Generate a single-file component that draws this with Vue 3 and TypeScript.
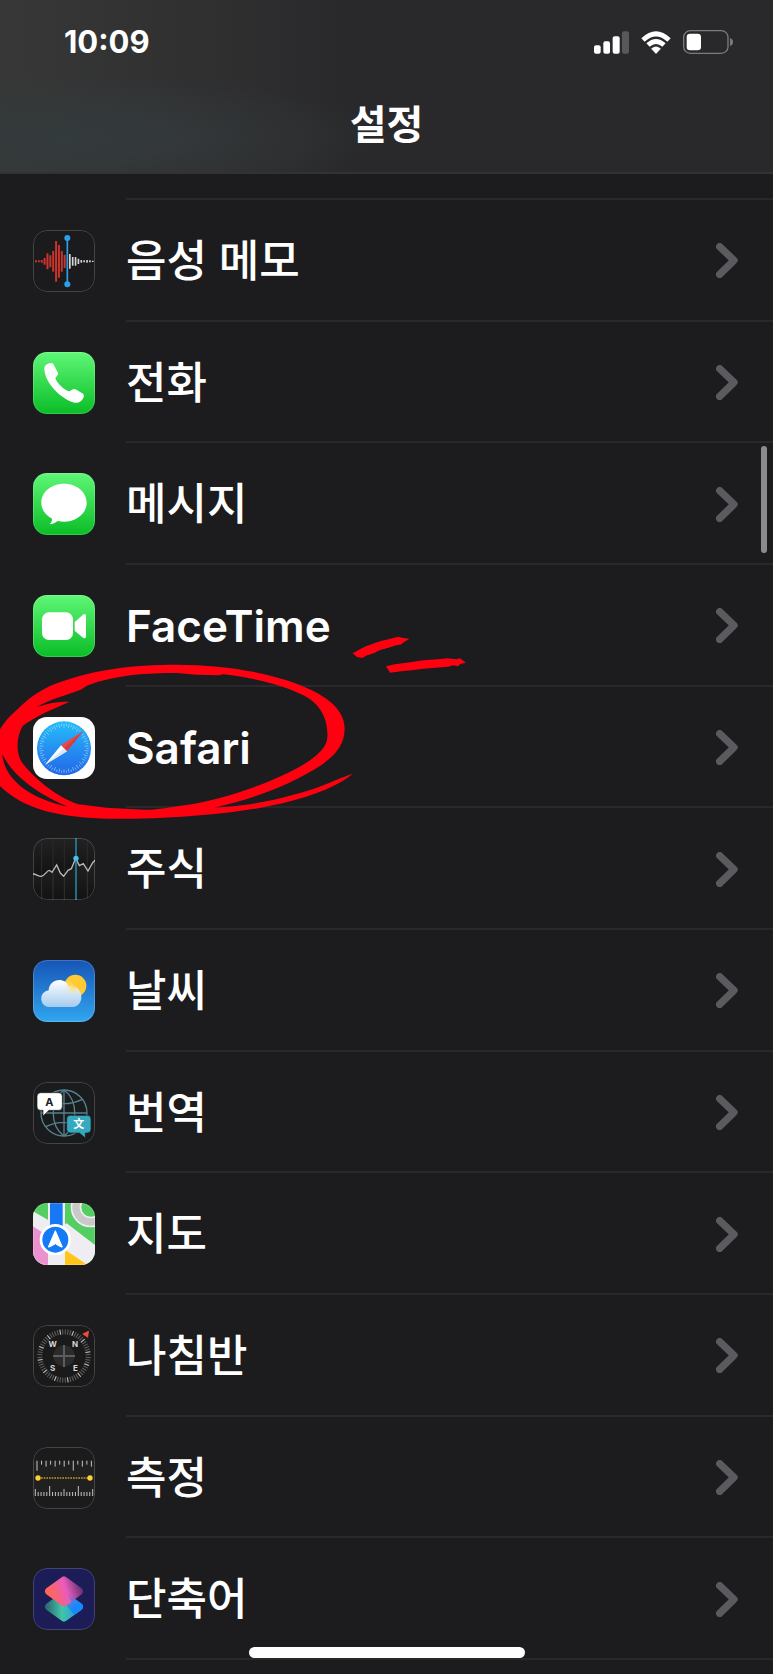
<script setup lang="ts">
interface SettingsItem {
  id: string
  label: string
  latin?: boolean
}

interface Tick {
  x: number
  length: number
}

const items: SettingsItem[] = [
  { id: 'voice', label: '음성 메모' },
  { id: 'phone', label: '전화' },
  { id: 'messages', label: '메시지' },
  { id: 'facetime', label: 'FaceTime', latin: true },
  { id: 'safari', label: 'Safari', latin: true },
  { id: 'stocks', label: '주식' },
  { id: 'weather', label: '날씨' },
  { id: 'translate', label: '번역' },
  { id: 'maps', label: '지도' },
  { id: 'compass', label: '나침반' },
  { id: 'measure', label: '측정' },
  { id: 'shortcuts', label: '단축어' },
]

const wave = [3, 3, 4, 10, 24, 18, 31, 61, 49, 31, 20]
const echo = [22, 13, 13, 8, 4, 3, 4, 3, 2]

const upperTicks: Tick[] = Array.from({ length: 13 }, (_, i) => ({
  x: 12 + i * 13.6,
  length: i === 0 || i === 8 ? 30 : i % 2 ? 12 : 18,
}))
const lowerTicks: Tick[] = Array.from({ length: 21 }, (_, i) => ({
  x: 7 + i * 8.6,
  length: i === 5 || i === 15 ? 30 : i % 5 === 0 ? 21 : 12,
}))
const dialTicks = Array.from({ length: 60 }, (_, i) => i * 6)
</script>

<template>
  <div class="screen">
    <header class="top">
      <div class="status">
        <time class="clock">10:09</time>
        <div class="signals">
          <svg class="bars" viewBox="0 0 105 69" aria-label="셀룰러 신호">
            <rect x="0" y="43" width="20" height="25" rx="6" fill="#fff" />
            <rect x="28" y="31" width="20" height="37" rx="6" fill="#fff" />
            <rect x="56" y="16" width="21" height="52" rx="6" fill="#fff" />
            <rect x="84" y="1" width="21" height="67" rx="6" fill="#58585a" />
          </svg>
          <svg class="wifi" viewBox="0 0 90 69" aria-label="Wi-Fi">
            <path d="M1 22Q45-20 89 22L79 32Q45 1 11 32Z" fill="#fff" />
            <path d="M16 37Q45 11 74 37L64 47Q45 31 26 47Z" fill="#fff" />
            <path d="M31 53Q45 41 59 53L45 68Z" fill="#fff" stroke="#fff" stroke-width="1" />
          </svg>
          <svg class="battery" viewBox="0 0 150 72" aria-label="배터리">
            <rect x="2" y="2" width="133" height="68" rx="20" fill="none" stroke="#7b7b7d" stroke-width="4" />
            <rect x="11" y="11" width="43" height="50" rx="10" fill="#fff" />
            <path d="M141 24Q150 27 150 36T141 48Z" fill="#7b7b7d" />
          </svg>
        </div>
      </div>
      <h1 class="title">설정</h1>
    </header>

    <main class="content">
      <ul class="list">
        <li v-for="item in items" :key="item.id" class="row">
          <a class="link" :href="'#' + item.id">
            <svg class="icon" viewBox="0 0 186 186" aria-hidden="true">
              <g v-if="item.id === 'voice'">
                <rect width="186" height="186" fill="#1b1b1d" />
                <rect v-for="(h, i) in wave" :key="'w' + i" :x="6 + i * 8.6" :y="94 - h" width="6" :height="h * 2" rx="1" fill="#c9342d" />
                <rect v-for="(h, i) in echo" :key="'e' + i" :x="108 + i * 8.6" :y="94 - h" width="5" :height="h * 2" rx="1" fill="#d6d6d6" />
                <path d="M103 24V163" stroke="#2b9fe8" stroke-width="5" />
                <circle cx="103" cy="24" r="9" fill="#2b9fe8" />
                <circle cx="103" cy="163" r="9" fill="#2b9fe8" />
              </g>

              <g v-else-if="item.id === 'phone'">
                <rect width="186" height="186" fill="url(#green)" />
                <path d="M34 51C33 41 43 34 54 33C59 33 62 37 64 42L74 61C76 66 75 69 71 73L67 79C70 92 97 117 109 118L117 113C121 110 125 110 130 113L148 124C153 127 154 132 151 138C147 147 137 154 125 152C86 143 35 93 34 51Z" fill="#fff" />
              </g>

              <g v-else-if="item.id === 'messages'">
                <rect width="186" height="186" fill="url(#green)" />
                <path d="M93 32C131 32 161 57 161 89S131 146 93 146C86 146 80 145 74 144C68 149 58 155 50 153C56 149 57 143 57 137C37 127 25 109 25 89C25 57 55 32 93 32Z" fill="#fff" />
              </g>

              <g v-else-if="item.id === 'facetime'">
                <rect width="186" height="186" fill="url(#green)" />
                <rect x="27" y="52" width="93" height="83" rx="21" fill="#fff" />
                <path d="M125 81L150 59Q159 53 159 64V123Q159 134 150 128L125 107Z" fill="#fff" />
              </g>

              <g v-else-if="item.id === 'safari'">
                <rect width="186" height="186" fill="#fff" />
                <circle cx="93" cy="94" r="81" fill="url(#safari-blue)" />
                <g stroke="#b9e5ff" stroke-width="1.6">
                  <path v-for="a in dialTicks" :key="a" :d="a % 12 ? 'M93 20V27' : 'M93 20V32'" :transform="`rotate(${a} 93 94)`" />
                </g>
                <path d="M150 43L84 85L102 103Z" fill="#ef4545" />
                <path d="M102 103L84 85L36 143Z" fill="#fff" />
                <path d="M150 43L93 94L102 103Z" fill="#d43d43" />
                <path d="M36 143L93 94L102 103Z" fill="#d9e8f7" />
              </g>

              <g v-else-if="item.id === 'stocks'">
                <rect width="186" height="186" fill="url(#stocks-black)" />
                <path d="M26 0V186M60 0V186M94 0V186M163 0V186" stroke="#2b2b2d" stroke-width="3" />
                <path d="M0 108C8 107 15 115 25 115C35 114 42 97 49 97L57 103L71 81L82 105L92 115L105 97L115 92L128 61L139 83L151 77L165 99L179 74L186 67V186H0Z" fill="#777" fill-opacity=".1" />
                <path d="M0 108C8 107 15 115 25 115C35 114 42 97 49 97L57 103L71 81L82 105L92 115L105 97L115 92L128 61L139 83L151 77L165 99L179 74L186 67" fill="none" stroke="#bababa" stroke-width="4" />
                <path d="M129 0V186" stroke="#25809d" stroke-width="5" />
                <circle cx="129" cy="61" r="8" fill="#43c3ee" />
              </g>

              <g v-else-if="item.id === 'weather'">
                <rect width="186" height="186" fill="url(#sky)" />
                <circle cx="127" cy="77" r="33" fill="#ffcb35" />
                <path d="M52 141A25 25 0 0 1 47 91C48 56 95 48 108 79C130 76 145 91 145 111C145 128 134 141 119 141Z" fill="url(#cloud)" />
                <path d="M95 78C98 70 103 65 108 61C117 70 138 95 143 103C145 120 90 112 95 78Z" fill="url(#glow)" />
              </g>

              <g v-else-if="item.id === 'translate'">
                <rect width="186" height="186" fill="#1a1b1c" />
                <g fill="none" stroke="#56818d" stroke-width="4">
                  <circle cx="93" cy="93" r="69" />
                  <path d="M93 24V162M24 93H162M38 52Q93 78 148 52M38 134Q93 108 148 134" />
                  <path d="M93 24C50 55 50 131 93 162M93 24C136 55 136 131 93 162" />
                </g>
                <path d="M23 32H77Q88 32 88 43V74Q88 85 77 85H48L30 102V85H23Q12 85 12 74V43Q12 32 23 32Z" fill="#fff" stroke="#1a1b1c" stroke-width="2" />
                <text x="49" y="73" class="glyph dark">A</text>
                <path d="M112 100H163Q174 100 174 111V142Q174 153 163 153H157V168L139 153H112Q101 153 101 142V111Q101 100 112 100Z" fill="#35a9bf" stroke="#1a1b1c" stroke-width="2" />
                <text x="137" y="139" class="glyph">文</text>
              </g>

              <g v-else-if="item.id === 'maps'">
                <rect width="186" height="186" fill="#54ce62" />
                <path d="M0 25L47 52V186H0Z" fill="#eeeef2" />
                <path d="M0 70L46 100V186H0Z" fill="#eb91d0" />
                <path d="M45 90L101 61L186 126V186H45Z" fill="#eeeef2" />
                <path d="M96 140L164 186H96Z" fill="#ffc619" />
                <path d="M45 0H96V78H45Z" fill="#eeeef2" />
                <path d="M51 0H89V80H51Z" fill="#1679f3" />
                <circle cx="173" cy="13" r="44" fill="none" stroke="#eeeef2" stroke-width="32" />
                <circle cx="173" cy="13" r="44" fill="none" stroke="#c9c9ca" stroke-width="22" />
                <circle cx="67" cy="110" r="47" fill="#fff" />
                <circle cx="67" cy="110" r="39" fill="#147af5" />
                <path d="M67 83L88 132Q86 134 67 122Q48 134 46 132Z" fill="#fff" stroke="#fff" stroke-width="3" stroke-linejoin="round" />
              </g>

              <g v-else-if="item.id === 'compass'">
                <rect width="186" height="186" fill="#1a1a1b" />
                <g stroke-width="3">
                  <path v-for="a in dialTicks" :key="a" d="M93 13V28" :stroke="(a + 15) % 30 < 6 ? '#d0d0d0' : '#626262'" :transform="`rotate(${a + 3} 93 93)`" />
                </g>
                <circle cx="93" cy="93" r="32" fill="#2b2b2c" />
                <path d="M93 60V126M60 93H126" stroke="#5c5c5e" stroke-width="6" />
                <path d="M149 27L167 18L164 37Z" fill="#f44a3e" stroke="#f44a3e" stroke-width="2" />
                <text x="59" y="66" class="cardinal">W</text>
                <text x="126" y="66" class="cardinal">N</text>
                <text x="59" y="137" class="cardinal">S</text>
                <text x="127" y="137" class="cardinal">E</text>
              </g>

              <g v-else-if="item.id === 'measure'">
                <rect width="186" height="186" fill="#1b1b1b" />
                <rect y="41" width="186" height="106" fill="#202020" />
                <g stroke="#c2c2c2" stroke-width="3">
                  <path v-for="tick in upperTicks" :key="'u' + tick.x" :d="`M${tick.x} 41v${tick.length}`" />
                  <path v-for="tick in lowerTicks" :key="'l' + tick.x" :d="`M${tick.x} 147v-${tick.length}`" />
                </g>
                <path d="M24 93H164" stroke="#bd982d" stroke-width="4" stroke-dasharray="5 3" />
                <circle cx="15" cy="93" r="8" fill="#ffcf33" />
                <circle cx="171" cy="93" r="8" fill="#ffcf33" />
              </g>

              <g v-else>
                <rect width="186" height="186" fill="#1c1c56" />
                <path d="M40 107L84 76Q93 70 102 76L146 107Q155 116 146 125L102 157Q93 165 84 157L40 125Q31 116 40 107Z" fill="url(#lower-tile)" />
                <path d="M40 61L84 29Q93 20 102 29L146 61Q155 70 146 79L102 111Q93 118 84 111L40 79Q31 70 40 61Z" fill="url(#upper-tile)" />
                <path d="M99 74L146 107Q155 116 146 125L124 141L101 112L116 101Q106 83 99 74Z" fill="url(#fold)" />
              </g>
              <rect x="1.5" y="1.5" width="183" height="183" rx="40" fill="none" stroke="#fff" stroke-opacity=".18" stroke-width="3" />
            </svg>
            <span class="label" :class="{ latin: item.latin }">{{ item.label }}</span>
            <svg class="chevron" viewBox="0 0 66 105" aria-hidden="true">
              <path d="M11 11L54 52L11 94" fill="none" stroke="#5b5b5f" stroke-width="22" stroke-linecap="round" stroke-linejoin="round" />
            </svg>
          </a>
          <svg v-if="item.id === 'safari'" class="marker" viewBox="0 0 1440 630" aria-hidden="true">
            <g fill="#ff0010">
              <path fill-rule="evenodd" d="M0 325C15 300 30 285 50 267C80 238 105 217 150 195C270 145 400 131 530 131C650 132 755 145 860 178C980 218 1035 265 1034 325C1033 370 1008 403 960 435C870 492 755 536 640 560C760 553 830 537 920 510C980 491 1025 468 1058 458C1030 482 990 501 940 520C850 552 730 573 600 583C500 592 380 597 280 591C130 584 50 544 0 495ZM110 258C150 235 205 221 245 205L260 194C350 160 445 156 530 156L590 161L655 163L670 160C765 171 850 192 910 223C965 250 985 300 982 350C980 390 920 430 850 462C770 500 650 539 560 552C500 559 470 568 430 566L320 560L235 550C165 525 100 470 65 423C48 395 48 350 68 315C100 290 160 263 208 243C180 239 145 247 110 258ZM7 400C12 470 80 530 205 558C125 523 45 475 7 400Z" />
              <path d="M1058 97C1080 86 1090 77 1115 70C1140 58 1165 56 1182 50L1195 47L1205 50L1228 53L1208 66C1205 74 1185 71 1180 76C1160 84 1145 83 1125 95L1098 104L1087 111L1071 108Z" />
              <path d="M1158 136L1185 130L1230 124L1270 118L1325 114L1340 112L1370 115L1380 112L1398 125L1381 129L1374 136L1360 133L1345 137L1270 143L1235 148L1210 150L1170 155Z" />
            </g>
          </svg>
        </li>
      </ul>
      <div class="scrollbar"></div>
    </main>
    <div class="home"></div>

    <svg class="defs" aria-hidden="true">
      <defs>
        <linearGradient id="green" x2="0" y2="1">
          <stop stop-color="#5ff777" />
          <stop offset="1" stop-color="#0abd26" />
        </linearGradient>
        <linearGradient id="safari-blue" x2="0" y2="1">
          <stop stop-color="#25bdfa" />
          <stop offset="1" stop-color="#2366e8" />
        </linearGradient>
        <linearGradient id="stocks-black" x2="0" y2="1">
          <stop stop-color="#222223" />
          <stop offset="1" stop-color="#080808" />
        </linearGradient>
        <linearGradient id="sky" x2="0" y2="1">
          <stop stop-color="#1755b7" />
          <stop offset="1" stop-color="#31a6ef" />
        </linearGradient>
        <linearGradient id="cloud" x2="0" y2="1">
          <stop stop-color="#fff" />
          <stop offset="1" stop-color="#a5cbef" />
        </linearGradient>
        <radialGradient id="glow" cx=".6" cy=".3" r=".6">
          <stop stop-color="#ffd958" />
          <stop offset="1" stop-color="#ffe58c" stop-opacity="0" />
        </radialGradient>
        <linearGradient id="upper-tile" gradientUnits="userSpaceOnUse" x1="55" y1="90" x2="150" y2="58">
          <stop stop-color="#ff6659" />
          <stop offset=".5" stop-color="#e95bbd" />
          <stop offset="1" stop-color="#5c2c6e" />
        </linearGradient>
        <linearGradient id="lower-tile" x2="1">
          <stop stop-color="#2a6170" />
          <stop offset=".45" stop-color="#43c5a5" />
          <stop offset="1" stop-color="#1689ff" />
        </linearGradient>
        <linearGradient id="fold" gradientUnits="userSpaceOnUse" x1="99" y1="80" x2="130" y2="112">
          <stop stop-color="#a85fae" stop-opacity=".3" />
          <stop offset="1" stop-color="#1689ff" />
        </linearGradient>
      </defs>
    </svg>
  </div>
</template>

<style>
body {
  margin: 0;
  background: #1c1c1e;
}
</style>

<style scoped>
.screen {
  position: relative;
  display: flex;
  flex-direction: column;
  min-height: 100vh;
  overflow: hidden;
  background: #1c1c1e;
  color: #fff;
  font-family: Inter, "Noto Sans CJK KR", sans-serif;
}

.top {
  box-sizing: border-box;
  height: 174px;
  border-bottom: 2px solid #323234;
  background:
    radial-gradient(ellipse at 8% 80%, #343b3d 0%, transparent 32%),
    linear-gradient(90deg, #363736 0%, #313132 22%, #29292b 46%, #29292b 100%);
}

.status {
  display: flex;
  align-items: center;
  justify-content: space-between;
  padding: 24px 40px 0 64px;
}

.clock {
  font-size: 31px;
  line-height: 36px;
  font-weight: 700;
}

.signals {
  display: flex;
  align-items: center;
  gap: 12px;
}

.bars {
  width: 35px;
  height: 23px;
}

.wifi {
  width: 30px;
  height: 23px;
}

.battery {
  width: 50px;
  height: 24px;
}

.title {
  margin: 39px 0 0;
  text-align: center;
  font-size: 40px;
  line-height: 52px;
  font-weight: 600;
}

.content {
  position: relative;
  display: flex;
  flex: 1;
  padding-bottom: 14px;
}

.list {
  display: flex;
  flex: 1;
  flex-direction: column;
  margin: 0;
  padding: 26px 0 0;
  list-style: none;
}

.list::before {
  content: "";
  height: 2px;
  margin: -2px 0 0 126px;
  background: #29292b;
}

.row {
  position: relative;
  display: flex;
  flex: 1;
  min-height: 96px;
}

.row::after {
  content: "";
  position: absolute;
  right: 0;
  bottom: 0;
  left: 126px;
  height: 2px;
  background: #29292b;
}

.link {
  display: flex;
  flex: 1;
  align-items: center;
  padding: 0 35px 0 33px;
  color: inherit;
  text-decoration: none;
}

.icon {
  flex: none;
  width: 62px;
  height: 62px;
  border-radius: 14px;
}

.label {
  flex: 1;
  margin-left: 31px;
  font-size: 44px;
  line-height: 60px;
  font-weight: 500;
}

.label.latin {
  font-weight: 600;
}

.chevron {
  flex: none;
  width: 22px;
  height: 35px;
}

.glyph {
  fill: #fff;
  font-family: Inter, "Noto Sans CJK SC", sans-serif;
  font-size: 33px;
  font-weight: 700;
  text-anchor: middle;
}

.glyph.dark {
  fill: #202020;
}

.cardinal {
  fill: #d8d8d8;
  font-size: 24px;
  font-weight: 700;
  text-anchor: middle;
}

.marker {
  position: absolute;
  z-index: 1;
  top: -66px;
  left: 0;
  width: 480px;
  height: 210px;
  pointer-events: none;
}

.scrollbar {
  position: absolute;
  top: 272px;
  right: 6px;
  width: 6px;
  height: 107px;
  border-radius: 3px;
  background: #8b8b8d;
}

.home {
  position: absolute;
  z-index: 2;
  bottom: 16px;
  left: 50%;
  width: 276px;
  height: 11px;
  margin-left: -138px;
  border-radius: 6px;
  background: #fff;
}

.defs {
  position: absolute;
  width: 0;
  height: 0;
}
</style>
